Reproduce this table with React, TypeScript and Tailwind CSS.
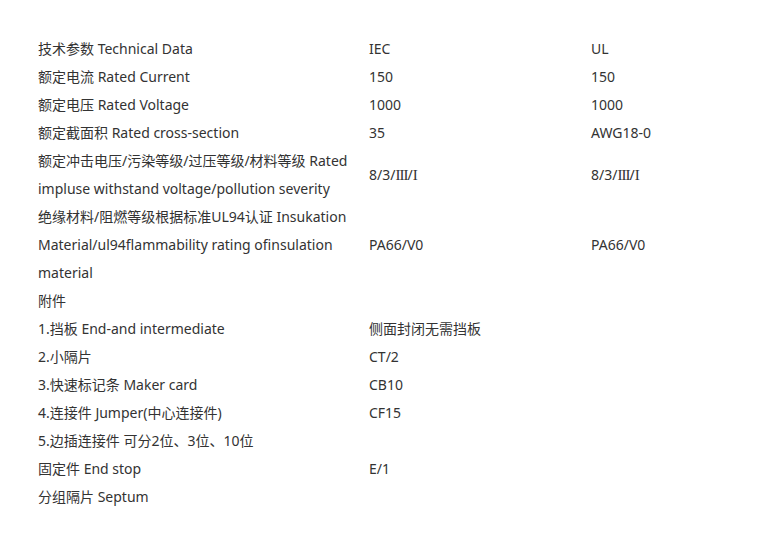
import React from "react";

type Row = { a: React.ReactNode; b?: React.ReactNode; c?: React.ReactNode };

const Roman = () => (
  <>
    8/3/<span className="font-['Liberation_Serif',serif] text-[15px] tracking-[-1px]">III</span>/
    <span className="font-['Liberation_Serif',serif] text-[15px]">I</span>
  </>
);

const rows: Row[] = [
  { a: "技术参数 Technical Data", b: "IEC", c: "UL" },
  { a: "额定电流 Rated Current", b: "150", c: "150" },
  { a: "额定电压 Rated Voltage", b: "1000", c: "1000" },
  { a: "额定截面积 Rated cross-section", b: "35", c: "AWG18-0" },
  {
    a: (
      <>
        额定冲击电压/污染等级/过压等级/材料等级 Rated
        <br />
        impluse withstand voltage/pollution severity
      </>
    ),
    b: <Roman />,
    c: <Roman />,
  },
  {
    a: (
      <>
        绝缘材料/阻燃等级根据标准UL94认证 Insukation
        <br />
        Material/ul94flammability rating ofinsulation
        <br />
        material
      </>
    ),
    b: "PA66/V0",
    c: "PA66/V0",
  },
  { a: "附件" },
  { a: "1.挡板 End-and intermediate", b: "侧面封闭无需挡板" },
  { a: "2.小隔片", b: "CT/2" },
  { a: "3.快速标记条 Maker card", b: "CB10" },
  { a: "4.连接件 Jumper(中心连接件)", b: "CF15" },
  { a: "5.边插连接件 可分2位、3位、10位" },
  { a: "固定件 End stop", b: "E/1" },
  { a: "分组隔片 Septum" },
];

export default function App() {
  return (
    <div className="min-h-[547px] w-[779px] bg-white pl-[38px] pt-[35px] font-['Noto_Sans','Noto_Sans_CJK_SC',sans-serif] text-[14px] leading-[28px] text-[#333]">
      <div className="grid grid-cols-[331px_222px_1fr]">
        {rows.map((r, i) => (
          <React.Fragment key={i}>
            <div className="whitespace-nowrap">{r.a}</div>
            <div className="flex items-center whitespace-nowrap">{r.b}</div>
            <div className="flex items-center whitespace-nowrap">{r.c}</div>
          </React.Fragment>
        ))}
      </div>
    </div>
  );
}
